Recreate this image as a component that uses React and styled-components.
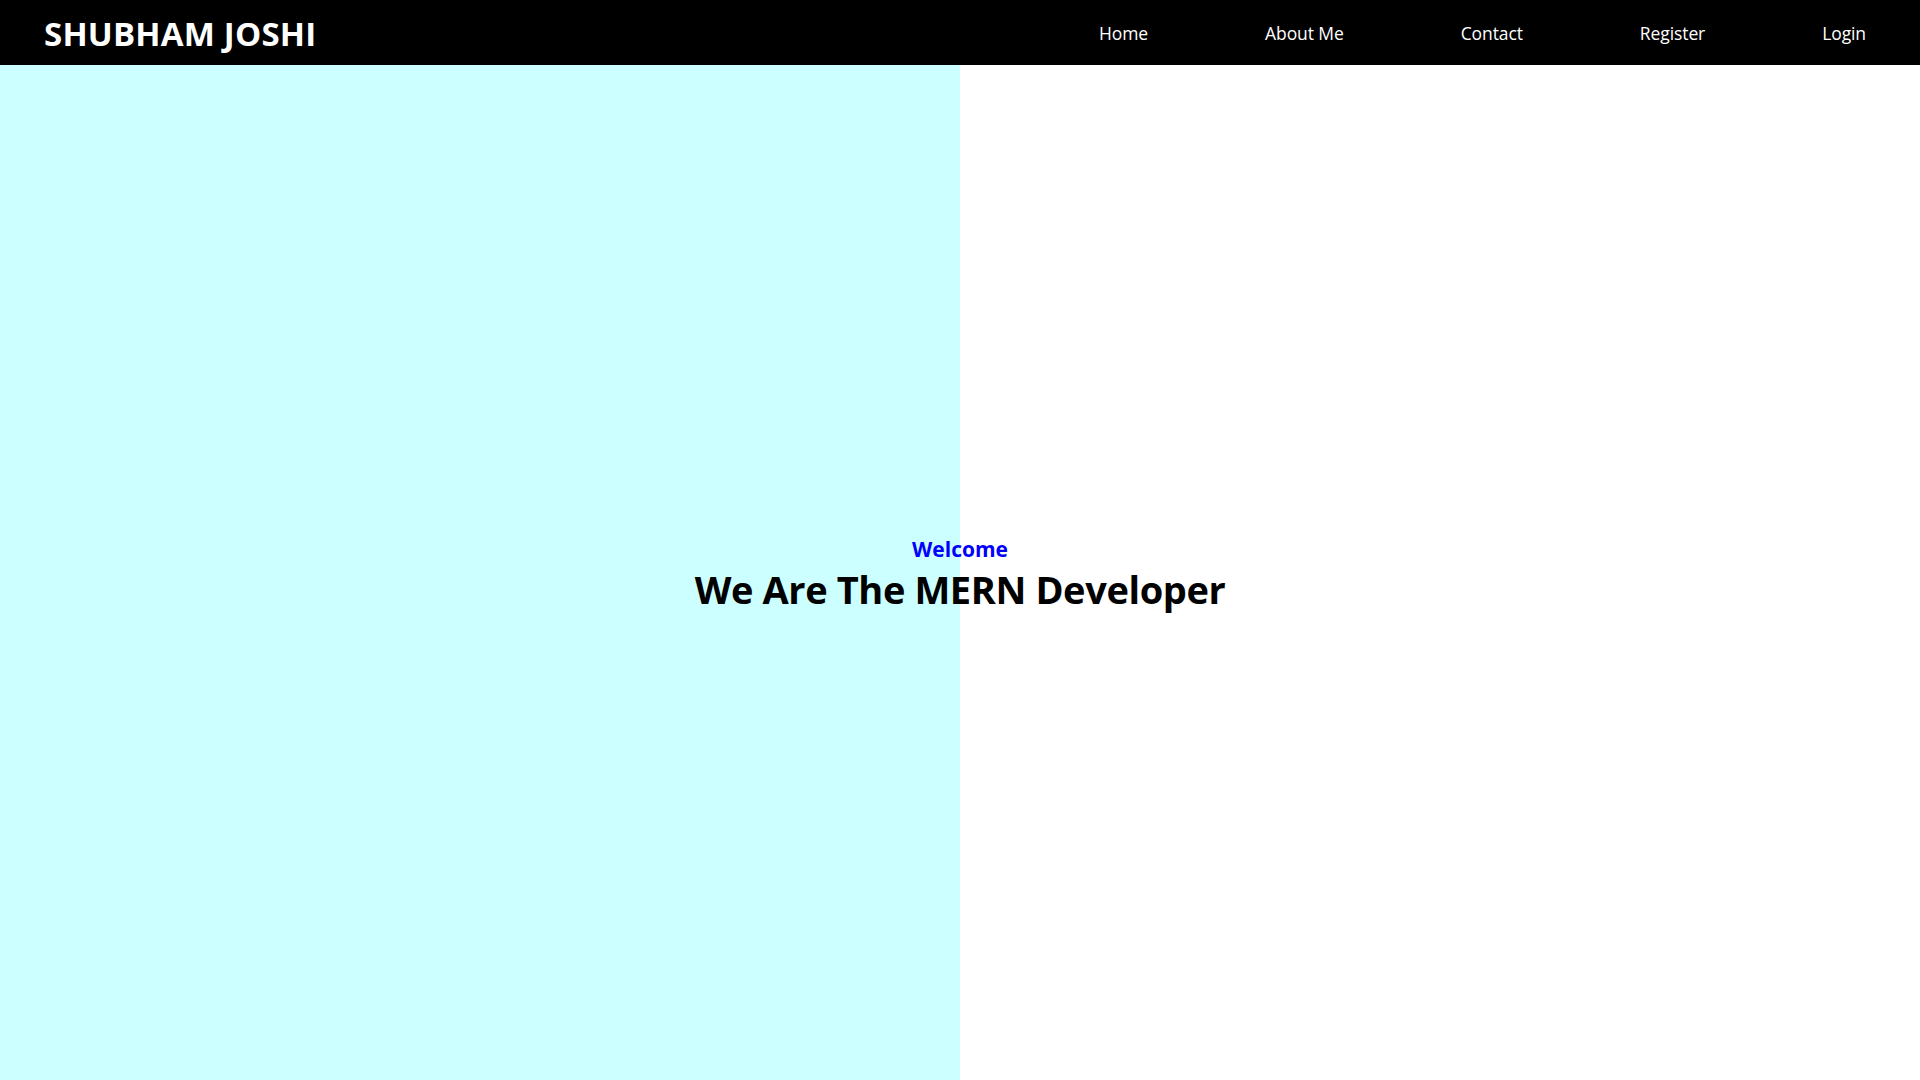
import React from "react";
import styled, { createGlobalStyle } from "styled-components";

const Global = createGlobalStyle`
  * { box-sizing: border-box; }
  html, body { margin: 0; padding: 0; }
  body { font-family: "Open Sans", "Noto Sans", Arial, sans-serif; background: #fff; }
`;

const Page = styled.div`
  display: flex;
  flex-direction: column;
  min-height: 100vh;
`;

const Navbar = styled.nav`
  height: 65px;
  background: #000;
  display: flex;
  align-items: center;
  justify-content: space-between;
  padding: 0 0 0 44px;
`;

const Logo = styled.div`
  color: #fff;
  font-weight: 700;
  font-size: 33px;
  letter-spacing: 0.2px;
  line-height: 1;
  padding-top: 2px;
`;

const Menu = styled.ul`
  display: flex;
  list-style: none;
  margin: 0;
  padding: 1px 54px 0 0;
  gap: 117px;
`;

const MenuItem = styled.li`
  color: #fff;
  font-size: 17.5px;
  letter-spacing: -0.1px;
`;

const Hero = styled.section`
  flex: 1;
  background: linear-gradient(to right, #ccffff 0, #ccffff 50%, #ffffff 50%, #ffffff 100%);
  display: flex;
  flex-direction: column;
  align-items: center;
  justify-content: center;
  text-align: center;
  padding-top: 4px;
`;

const Welcome = styled.p`
  margin: 0 0 0;
  color: #0000ff;
  font-weight: 700;
  font-size: 21px;
`;

const Title = styled.h1`
  margin: 0;
  color: #000;
  font-weight: 700;
  font-size: 38px;
  letter-spacing: -0.4px;
`;

export default function App() {
  const items = ["Home", "About Me", "Contact", "Register", "Login"];
  return (
    <Page>
      <Global />
      <Navbar>
        <Logo>SHUBHAM JOSHI</Logo>
        <Menu>
          {items.map((i) => (
            <MenuItem key={i}>{i}</MenuItem>
          ))}
        </Menu>
      </Navbar>
      <Hero>
        <Welcome>Welcome</Welcome>
        <Title>We Are The MERN Developer</Title>
      </Hero>
    </Page>
  );
}
